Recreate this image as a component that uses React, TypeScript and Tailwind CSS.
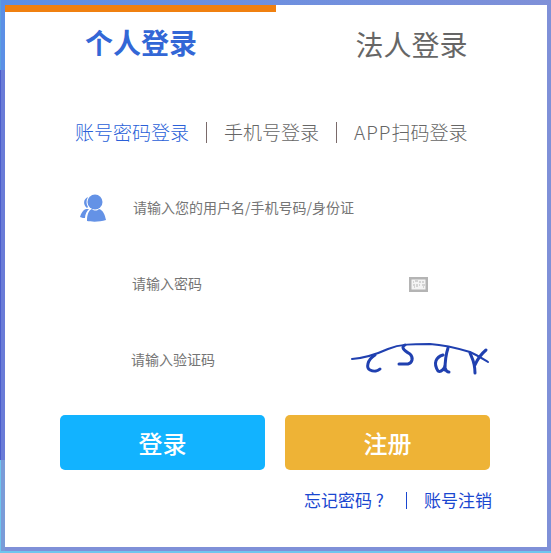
const FONT = '"Noto Sans CJK SC", "Noto Sans", sans-serif';

function UserIcon() {
  return (
    <svg width="28" height="28" viewBox="0 0 28 28" fill="#6492e6">
      <circle cx="16" cy="8" r="7.500" />
      <path d="M8 27 C 8 20 10 16 13 15 C 15 17 18 17 20 15 C 24 16 26 21 27 26 C 21 28 13 28 8 27z" />
      <path d="M9 3 C 4 5 4 11 8 14 L 9 13 C 7 10 7 6 9 3z" />
      <path d="M7 15 C 4 16 2 19 1 23 C 3 24 5 24 6 24 C 6 20 8 17 10 15z" />
    </svg>
  );
}

function KeyboardIcon() {
  return (
    <svg width="19" height="15" viewBox="0 0 19 15">
      <rect x="0" y="0" width="19" height="15" fill="#b4b4b4" />
      <rect x="2.500" y="2.500" width="14" height="10" fill="#f4f4f4" />
      <path d="M4 5h1M6 4h3M10 5h2M13 5h2M4 8h2M8 7v3M10 8h1M13 8h3M5 10h1M14 10h1" stroke="#b4b4b4" strokeWidth="1" fill="none" />
    </svg>
  );
}

function Captcha() {
  return (
    <svg className="mb-[4px]" width="140" height="36" viewBox="0 0 140 36" fill="none" stroke="#2040b0" strokeLinecap="round" strokeLinejoin="round">
      <path d="M2 19 C 15 18 27 14 38 9 C 50 4 62 4 80 4 C 95 5 110 9 120 12 C 127 15 133 19 138 22" strokeWidth="2" />
      <path d="M25 15 C 17 20 16 28 20 30 C 24 32 28 31 30 29" strokeWidth="3" />
      <path d="M55 5 C 51 7 53 10 60 14 C 64 18 62 23 58 24 C 55 24 52 24 49 24" strokeWidth="3" />
      <path d="M98 8 C 96 14 95 24 95 30 M93 15 C 86 17 83 23 88 31 C 91 33 95 28 95 25 M95 28 C 96 31 97 32 99 32" strokeWidth="3" />
      <path d="M120 13 C 122 18 125 22 125 33 M125 25 C 128 18 130 15 136 10" strokeWidth="3" />
    </svg>
  );
}

export default function App() {
  return (
    <div className="flex h-[553px] w-[551px] flex-col overflow-hidden bg-white" style={{ fontFamily: FONT }}>
      <div className="flex h-[551px]">
        <div className="w-[1px] bg-[linear-gradient(to_bottom,#5b9fe0_70px,#4a5dcb_70px,#4a5dcb_460px,#6fc5ee_460px)]" />
        <div className="w-[4px] bg-[linear-gradient(to_bottom,#5b8fe6_70px,#6a7cd8_70px,#6a7cd8_460px,#7a9bd8_460px)]" />
        <div className="flex flex-1 flex-col">
          <div className="h-[5px] bg-gradient-to-r from-[#5b8fe6] to-[#7f90d8]" />
          <div className="flex flex-1 flex-col border-r-[4px] border-b-[4px] border-[#7f90d8] bg-white">
            <div className="h-[7px] w-[271px] bg-[#f08010]" />

            <div className="mt-[5px] flex h-[50px] items-center text-[28px] leading-[50px]">
              <div className="w-[271px] pl-[1px] text-center font-bold text-[#3367d6]">个人登录</div>
              <div className="w-[271px] pt-[4px] text-center text-[#666666]">法人登录</div>
            </div>

            <div className="mt-[50px] flex h-[30px] items-center pl-[70px] text-[19px] font-light text-[#666666]">
              <span className="text-[#2a5fd8]">账号密码登录</span>
              <span className="mx-[17px] h-[21px] w-[1px] bg-[#7a6a6a]" />
              <span>手机号登录</span>
              <span className="mx-[17px] h-[21px] w-[1px] bg-[#7a6a6a]" />
              <span><span className="tracking-[1px]">APP</span>扫码登录</span>
            </div>

            <div className="mt-[46px] flex h-[30px] items-center">
              <div className="ml-[74px]"><UserIcon /></div>
              <input readOnly placeholder="请输入您的用户名/手机号码/身份证" className="mb-[2px] ml-[26px] w-[260px] text-[14px] text-[#757575] outline-none placeholder:text-[#757575]" />
            </div>

            <div className="mt-[46px] flex h-[30px] items-center">
              <input readOnly placeholder="请输入密码" className="mb-[2px] ml-[127px] w-[277px] text-[14px] text-[#757575] outline-none placeholder:text-[#757575]" />
              <KeyboardIcon />
            </div>

            <div className="mt-[39px] flex h-[44px] items-center">
              <input readOnly placeholder="请输入验证码" className="mb-[2px] ml-[126px] w-[219px] text-[14px] text-[#757575] outline-none placeholder:text-[#757575]" />
              <Captcha />
            </div>

            <div className="mt-[33px] flex gap-[20px] pl-[55px]">
              <button className="flex h-[55px] w-[205px] items-center justify-center rounded-[5px] bg-[#12b3ff] text-[24px] font-medium text-white">登录</button>
              <button className="flex h-[55px] w-[205px] items-center justify-center rounded-[5px] bg-[#eeb336] text-[24px] font-medium text-white">注册</button>
            </div>

            <div className="mt-[17px] flex h-[26px] items-center pl-[299px] text-[17px] font-normal text-[#1a47d0]">
              <span className="w-[83px] whitespace-nowrap">忘记密码 ?</span>
              <span className="ml-[19px] mr-[17px] h-[17px] w-[1px] bg-[#1a47d0]" />
              <span>账号注销</span>
            </div>
          </div>
        </div>
      </div>
      <div className="h-[2px] bg-[#6fc5ee]" />
    </div>
  );
}
